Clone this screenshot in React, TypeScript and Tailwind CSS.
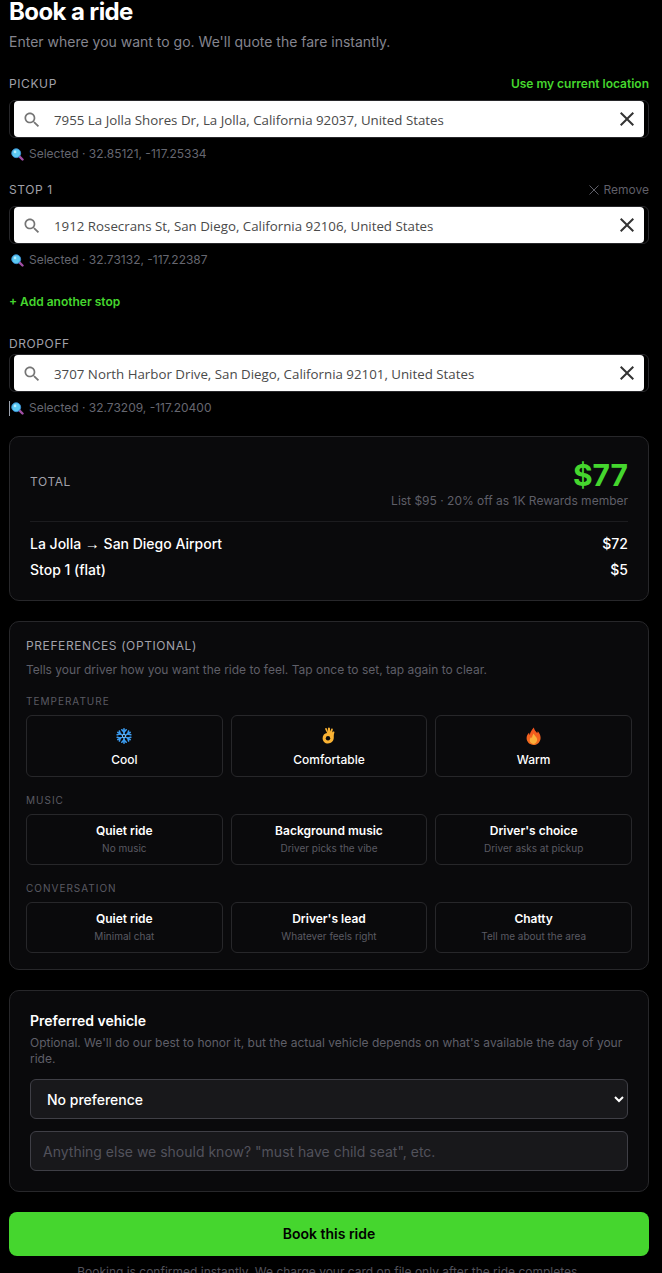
const inter = "font-['Inter',sans-serif]";

const LensEmoji = () => (
  <svg width="13" height="13" viewBox="0 0 14 14" className="shrink-0">
    <path d="M8.2 8.2 12.4 12.4" stroke="#a24fa6" strokeWidth="2.6" strokeLinecap="round" />
    <circle cx="5.6" cy="5.6" r="4.8" fill="#5cc9f2" stroke="#3a8fd0" strokeWidth="1" />
    <circle cx="4.4" cy="4.2" r="1.4" fill="#b5ecff" />
  </svg>
);

const Snowflake = () => (
  <svg width="16" height="16" viewBox="0 0 16 16" fill="none" stroke="#3c9df2" strokeWidth="1.6" strokeLinecap="round">
    <path d="M8 .8v14.4M1.8 4.4l12.4 7.2M14.2 4.4 1.8 11.6" />
    <path d="M5.8 1.8 8 4l2.2-2.2M5.8 14.2 8 12l2.2 2.2M1.2 6.8 4.2 6 3.4 3M14.8 9.2 11.8 10l.8 3M14.8 6.8 11.8 6l.8-3M1.2 9.2 4.2 10l-.8 3" />
    <circle cx="8" cy="8" r="1.6" fill="#0a0a0c" stroke="#7cc4fa" strokeWidth="1" />
  </svg>
);

const OkHand = () => (
  <svg width="14" height="18" viewBox="0 0 14 18">
    <path
      d="M3.4 1.2c.7-.5 1.4.1 1.6.9l.7 2.6.3-3.6c.1-.8 1.7-.9 1.9 0l.3 3.4 1-2.6c.4-.8 1.8-.4 1.6.5l-.7 3.2 1-1c.7-.5 1.6.2 1.3 1-.6 1.6-.6 3-.6 5 0 3.600-2.600 5.900-5.900 5.900C3 16.500.6 14.200.6 11.200c0-2.700 2-4.900 4.500-5.100L3.300 2.500c-.2-.5-.2-1 .1-1.300Z"
      fill="#f9b233"
    />
    <circle cx="6" cy="11.200" r="2.200" fill="#0a0a0c" />
  </svg>
);

const Flame = () => (
  <svg width="15" height="18" viewBox="0 0 15 18">
    <defs>
      <linearGradient id="flame" x1="0" y1="0" x2="0" y2="1">
        <stop offset="0" stopColor="#f4511e" />
        <stop offset="1" stopColor="#f0701f" />
      </linearGradient>
    </defs>
    <path d="M7.800.4c.6 2.800 2 3.800 3.300 5.600.4-.5.600-1.100.7-1.800 1.700 1.900 2.800 4.200 2.800 6.500 0 4-3 7.300-7 7.300s-7-3.100-7-6.900c0-2.400 1.200-4 2.500-5.300.1.900.3 1.500.8 2.100C4 5 5.800 3 7.800.4Z" fill="url(#flame)" />
    <path d="M7.800 6.500c.4 1.700 1.700 2.500 2.500 3.800.8 1.300 1 2.300.7 3.500-.5 2-2 3.100-3.600 3.100-2 0-3.600-1.500-3.600-3.600 0-1.300.5-2.300 1.400-3.200.2.500.4.800.8 1.100 0-1.800.7-3.300 1.800-4.700Z" fill="#fbb03b" />
  </svg>
);

const MaterialSearch = () => (
  <svg width="20" height="20" viewBox="0 0 24 24" fill="#757575" className="mt-px shrink-0">
    <path d="M15.500 14h-.79l-.28-.27C15.410 12.590 16 11.110 16 9.500 16 5.910 13.090 3 9.500 3S3 5.910 3 9.500 5.910 16 9.500 16c1.610 0 3.090-.59 4.230-1.570l.27.28v.79l5 4.990L20.490 19l-4.990-5zm-6 0C7.010 14 5 11.990 5 9.500S7.010 5 9.500 5 14 7.010 14 9.500 11.990 14 9.500 14z" />
  </svg>
);

const MaterialClose = () => (
  <svg width="24" height="24" viewBox="0 0 24 24" fill="#333333" className="shrink-0">
    <path d="M19 6.410 17.590 5 12 10.590 6.410 5 5 6.410 10.590 12 5 17.590 6.410 19 12 13.410 17.590 19 19 17.590 13.410 12z" />
  </svg>
);

const AddressField = ({ value, coords, caret }: { value: string; coords: string; caret?: boolean }) => (
  <div>
    <div className="h-[38px] rounded-[6px] border border-[#27272a] px-1">
      <div className="flex h-[36px] items-center rounded-[4px] bg-white pl-[8px] pr-[5px]">
        <MaterialSearch />
        <input
          readOnly
          defaultValue={value}
          className="ml-[12px] min-w-0 flex-1 bg-transparent pt-[3px] font-['Open_Sans',sans-serif] text-[13.3px] text-[#4a4a4a] outline-none"
        />
        <MaterialClose />
      </div>
    </div>
    <div className="mt-[7px] flex h-[18px] items-center text-[12px] text-[#666770]">
      {caret && <span className="h-[15px] w-px bg-[#9ca3af]" />}
      <span className={caret ? 'ml-px mr-[5px]' : 'ml-[2px] mr-[5px]'}>
        <LensEmoji />
      </span>
      Selected · {coords}
    </div>
  </div>
);

const Choice = ({ title, sub }: { title: string; sub: string }) => (
  <div className="flex h-[51px] flex-col items-center justify-center rounded-[6px] border border-[#27272a] pb-[2px]">
    <div className="text-[12px] font-semibold leading-[18px] text-white">{title}</div>
    <div className="text-[10px] leading-[16px] text-[#5a5a63]">{sub}</div>
  </div>
);

const Temp = ({ icon, label }: { icon: React.ReactNode; label: string }) => (
  <div className="flex h-[62px] flex-col items-center justify-center rounded-[6px] border border-[#27272a] pt-[2px]">
    <div className="flex h-[24px] items-center">{icon}</div>
    <div className="mt-[2px] text-[12px] font-medium leading-[20px] text-white">{label}</div>
  </div>
);

const GroupLabel = ({ children }: { children: string }) => (
  <div className="text-[10px] leading-[14px] tracking-[0.1em] text-[#5a5a63]">{children}</div>
);

export default function App() {
  return (
    <div className={`h-screen overflow-hidden bg-black ${inter}`}>
      <div className="ml-[9px] w-[640px]">
        <h1 className="text-[24px] font-bold leading-[24px] tracking-[-0.025em] text-white">Book a ride</h1>
        <p className="mt-[8px] text-[14px] leading-[20px] text-[#85858f]">
          Enter where you want to go. We'll quote the fare instantly.
        </p>

        <div className="mt-[22px] flex h-[20px] items-center justify-between">
          <span className="text-[12px] tracking-[0.05em] text-[#a1a1aa]">PICKUP</span>
          <span className="text-[12px] font-semibold text-[#45d62e]">Use my current location</span>
        </div>
        <div className="mt-[6px]">
          <AddressField value="7955 La Jolla Shores Dr, La Jolla, California 92037, United States" coords="32.85121, -117.25334" />
        </div>

        <div className="mt-[17px] flex h-[20px] items-center justify-between">
          <span className="text-[12px] tracking-[0.05em] text-[#a1a1aa]">STOP 1</span>
          <span className="flex items-center gap-[4px] text-[12px] text-[#5f5f68]">
            <svg width="10" height="10" viewBox="0 0 10 10" stroke="currentColor" strokeWidth="1">
              <path d="M.5.500l9 9M9.500.500l-9 9" />
            </svg>
            Remove
          </span>
        </div>
        <div className="mt-[6px]">
          <AddressField value="1912 Rosecrans St, San Diego, California 92106, United States" coords="32.73132, -117.22387" />
        </div>

        <div className="mt-[24px] text-[12px] font-semibold leading-[18px] text-[#45d62e]">+ Add another stop</div>

        <div className="mt-[23px] flex h-[20px] items-center text-[12px] tracking-[0.05em] text-[#a1a1aa]">DROPOFF</div>
        <AddressField caret value="3707 North Harbor Drive, San Diego, California 92101, United States" coords="32.73209, -117.20400" />

        <section className="mt-[19px] rounded-[10px] border border-[#27272a] bg-[#0a0a0c] px-5 pt-[23px] pb-[18px]">
          <div className="flex items-center justify-between border-b border-[#1c1c1f] pb-[12px]">
            <span className="mb-[6px] text-[12px] tracking-[0.05em] text-[#a1a1aa]">TOTAL</span>
            <div className="text-right">
              <div className="text-[30px] font-bold leading-[30px] text-[#45d62e]">$77</div>
              <div className="mt-[3px] text-[12px] leading-[16px] text-[#5f5f68]">List $95 · 20% off as 1K Rewards member</div>
            </div>
          </div>
          <div className="mt-[8px] flex h-[26px] items-center justify-between text-[14px] font-medium text-white">
            <span>
              La Jolla <span className="font-['Liberation_Sans',sans-serif] text-[15px] font-normal leading-none">→</span> San Diego Airport
            </span>
            <span>$72</span>
          </div>
          <div className="flex h-[26px] items-center justify-between text-[14px] font-medium text-white">
            <span>Stop 1 (flat)</span>
            <span>$5</span>
          </div>
        </section>

        <section className="mt-[20px] rounded-[10px] border border-[#27272a] bg-[#0a0a0c] px-4 pt-[15px] pb-4">
          <div className="text-[12px] leading-[18px] tracking-[0.05em] text-[#a1a1aa]">PREFERENCES (OPTIONAL)</div>
          <div className="mt-[6px] text-[12px] leading-[18px] text-[#5f5f68]">
            Tells your driver how you want the ride to feel. Tap once to set, tap again to clear.
          </div>

          <div className="mt-[15px]"><GroupLabel>TEMPERATURE</GroupLabel></div>
          <div className="mt-[7px] grid grid-cols-3 gap-2">
            <Temp icon={<Snowflake />} label="Cool" />
            <Temp icon={<OkHand />} label="Comfortable" />
            <Temp icon={<Flame />} label="Warm" />
          </div>

          <div className="mt-[16px]"><GroupLabel>MUSIC</GroupLabel></div>
          <div className="mt-[7px] grid grid-cols-3 gap-2">
            <Choice title="Quiet ride" sub="No music" />
            <Choice title="Background music" sub="Driver picks the vibe" />
            <Choice title="Driver's choice" sub="Driver asks at pickup" />
          </div>

          <div className="mt-[16px]"><GroupLabel>CONVERSATION</GroupLabel></div>
          <div className="mt-[7px] grid grid-cols-3 gap-2">
            <Choice title="Quiet ride" sub="Minimal chat" />
            <Choice title="Driver's lead" sub="Whatever feels right" />
            <Choice title="Chatty" sub="Tell me about the area" />
          </div>
        </section>

        <section className="mt-[20px] rounded-[10px] border border-[#27272a] bg-[#0a0a0c] px-5 pt-[20px] pb-5">
          <div className="text-[14px] font-semibold leading-[20px] text-white">Preferred vehicle</div>
          <div className="mt-[4px] text-[12px] leading-[16px] text-[#5f5f68]">
            Optional. We'll do our best to honor it, but the actual vehicle depends on what's available the day of your ride.
          </div>
          <select
            defaultValue="none"
            className="mt-[12px] block h-[40px] w-full rounded-[6px] border border-[#3f3f46] bg-[#18181b] pl-3 pr-[2px] text-[14px] font-medium text-white outline-none"
          >
            <option value="none">No preference</option>
          </select>
          <input
            placeholder={'Anything else we should know? "must have child seat", etc.'}
            className="mt-[12px] block h-[40px] w-full rounded-[6px] border border-[#3f3f46] bg-[#18181b] pl-3 text-[14px] text-white outline-none placeholder:text-[#52525b]"
          />
        </section>

        <div className="mt-[20px] flex h-[44px] items-center justify-center rounded-[8px] bg-[#45d62e] pb-[2px] text-[14px] font-semibold text-black">
          Book this ride
        </div>
        <p className="mt-[8px] text-center text-[12px] leading-[16px] text-[#52525b]">
          Booking is confirmed instantly. We charge your card on file only after the ride completes.
        </p>
      </div>
    </div>
  );
}
